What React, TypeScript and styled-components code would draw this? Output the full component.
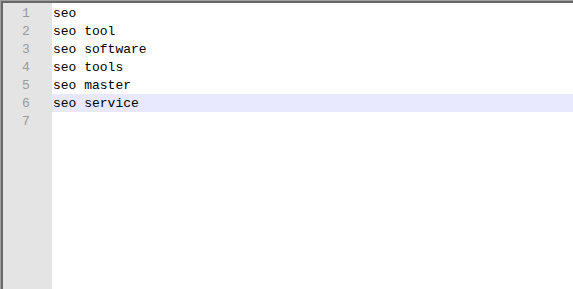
import React from 'react'
import styled, { createGlobalStyle } from 'styled-components'

const GlobalStyle = createGlobalStyle`
  html, body {
    margin: 0;
    padding: 0;
    background: #ffffff;
  }
`

const lines = ['seo', 'seo tool', 'seo software', 'seo tools', 'seo master', 'seo service', '']
const activeLine = 5

const Frame = styled.div`
  width: 573px;
  height: 289px;
  box-sizing: border-box;
  border-top: 1px solid #a0a0a0;
  border-left: 1px solid #a0a0a0;
  overflow: hidden;
`

const Editor = styled.div`
  display: flex;
  height: 100%;
  box-sizing: border-box;
  border-top: 2px solid #696969;
  border-left: 2px solid #696969;
  font-family: 'Liberation Mono', 'Courier New', monospace;
  font-size: 13px;
`

const Gutter = styled.div`
  width: 49px;
  flex-shrink: 0;
  background: #e4e4e4;
  padding-top: 1px;
`

const LineNumber = styled.div`
  height: 18px;
  line-height: 19px;
  color: #9a9a9a;
  text-align: center;
  padding-right: 3px;
  box-sizing: border-box;
`

const Content = styled.div`
  flex: 1;
  padding-top: 1px;
`

const Line = styled.div<{ $active?: boolean }>`
  height: 18px;
  line-height: 19px;
  padding-left: 1px;
  color: #000000;
  white-space: pre;
  background: ${(p) => (p.$active ? '#e8e8ff' : 'transparent')};
`

const App = () => {
  return (
    <>
      <GlobalStyle />
      <Frame>
        <Editor>
          <Gutter>
            {lines.map((_, i) => (
              <LineNumber key={i}>{i + 1}</LineNumber>
            ))}
          </Gutter>
          <Content>
            {lines.map((text, i) => (
              <Line key={i} $active={i === activeLine}>
                {text}
              </Line>
            ))}
          </Content>
        </Editor>
      </Frame>
    </>
  )
}

export default App
